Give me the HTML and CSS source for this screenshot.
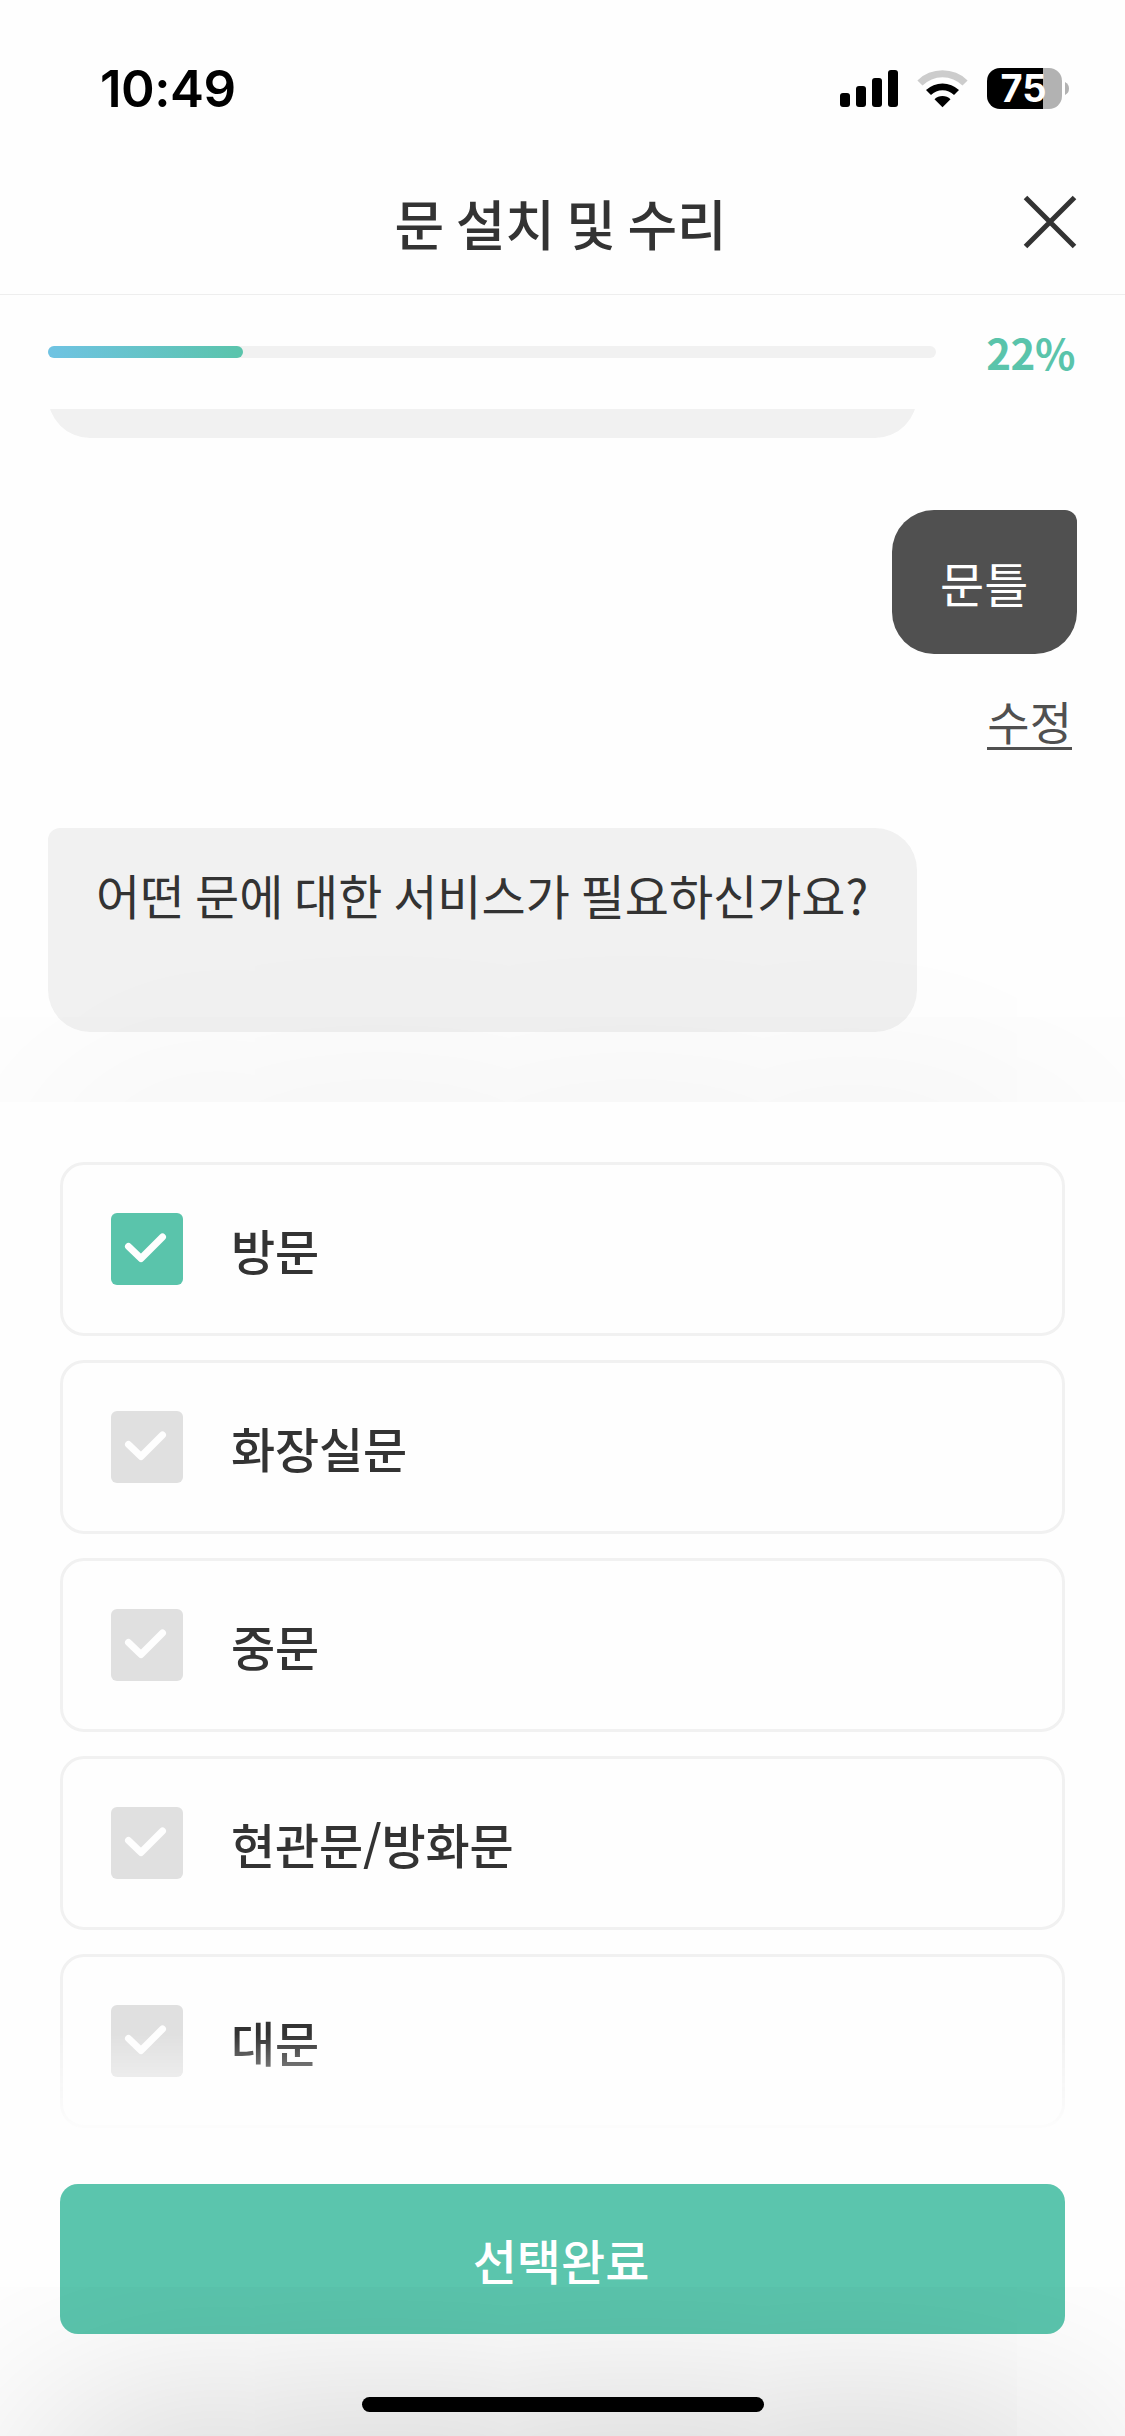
FILE: index.html
```html
<!DOCTYPE html>
<html lang="ko">
<head>
<meta charset="utf-8">
<title>문 설치 및 수리</title>
<link rel="stylesheet" href="styles.css">
</head>
<body>
<div class="screen">
  <div class="status-bar">
    <span class="time">10:49</span>
    <svg class="status-icons" width="229" height="41" viewBox="0 0 229 41">
      <rect x="0" y="25" width="10" height="14" rx="3"/>
      <rect x="16" y="18" width="10" height="21" rx="3"/>
      <rect x="32" y="10" width="10" height="29" rx="3"/>
      <rect x="48" y="2" width="10" height="37" rx="3"/>
      <path d="M77.400 12.400A36 36 0 0 1 127.600 12.400L122.500 17.500A28.500 28.500 0 0 0 82.500 17.500Z" fill="#ccc"/>
      <path d="M86 22A24 24 0 0 1 119 22L114 27A16.500 16.500 0 0 0 91 27Z"/>
      <path d="M94.500 31.300A11.500 11.500 0 0 1 110.500 31.300L102.500 39.300Z"/>
      <path d="M160 0H203V41H160A13 13 0 0 1 147 28V13A13 13 0 0 1 160 0Z"/>
      <path d="M203 0H209A13 13 0 0 1 222 13V28A13 13 0 0 1 209 41H203Z" fill="#b2b2b2"/>
      <path d="M225 14Q229 16 229 20.500T225 27Z" fill="#b2b2b2"/>
      <text class="battery-level" x="183.500" y="34" text-anchor="middle">75</text>
    </svg>
  </div>
  <header class="header">
    <h1 class="title">문 설치 및 수리</h1>
    <svg class="close" width="54" height="54" viewBox="0 0 54 54"><path d="M2.500 2.500L51.500 51.500M51.500 2.500L2.500 51.500"/></svg>
  </header>
  <div class="progress">
    <div class="track"><div class="fill" style="width: 22%"></div></div>
    <span class="percent">22%</span>
  </div>
  <main class="chat">
    <div class="bubble question previous"></div>
    <div class="bubble answer">문틀</div>
    <a class="edit">수정</a>
    <div class="bubble question current">어떤 문에 대한 서비스가 필요하신가요?</div>
    <div class="chat-shade"></div>
  </main>
  <section class="sheet">
    <ul class="options">
      <li class="option"><span class="box checked"><svg viewBox="0 0 72 72"><path d="M17.500 33.500L30 45.500L51.500 24"/></svg></span>방문</li>
      <li class="option"><span class="box"><svg viewBox="0 0 72 72"><path d="M17.500 33.500L30 45.500L51.500 24"/></svg></span>화장실문</li>
      <li class="option"><span class="box"><svg viewBox="0 0 72 72"><path d="M17.500 33.500L30 45.500L51.500 24"/></svg></span>중문</li>
      <li class="option"><span class="box"><svg viewBox="0 0 72 72"><path d="M17.500 33.500L30 45.500L51.500 24"/></svg></span>현관문/방화문</li>
      <li class="option"><span class="box"><svg viewBox="0 0 72 72"><path d="M17.500 33.500L30 45.500L51.500 24"/></svg></span>대문</li>
    </ul>
    <div class="submit">선택완료</div>
    <div class="home-bar"></div>
    <div class="sheet-shade"></div>
  </section>
</div>
</body>
</html>
```
FILE: styles.css
```css
* { box-sizing: border-box; }
body { margin: 0; background: #fefefe; }
.screen {
  display: flex;
  flex-direction: column;
  width: 1125px;
  height: 2436px;
  overflow: hidden;
  background: #fefefe;
  color: #333;
  font-family: "Noto Sans CJK KR", sans-serif;
  font-size: 48px;
  line-height: 72px;
}
.status-bar {
  display: flex;
  justify-content: space-between;
  align-items: center;
  height: 132px;
  padding: 45px 56px 0 100px;
}
.time {
  font: 600 51px/60px Inter, sans-serif;
  letter-spacing: -0.5px;
  color: #000;
}
.status-icons { display: block; overflow: visible; }
.battery-level { font: 700 38px Inter, sans-serif; fill: #fff; }
.header {
  display: grid;
  grid-template-columns: 54px 1fr 54px;
  align-items: center;
  height: 163px;
  padding: 4px 48px 0;
  border-bottom: 1px solid #eee;
}
.title {
  grid-column: 2;
  margin: 15px 4px 0 0;
  text-align: center;
  font-size: 54px;
  font-weight: 500;
  letter-spacing: -0.2px;
  word-spacing: -3.2px;
}
.close { fill: none; stroke: #333; stroke-width: 5; margin-top: 14px; }
.progress {
  display: flex;
  align-items: center;
  justify-content: space-between;
  height: 114px;
  padding: 0 50px 0 48px;
}
.track { width: 888px; height: 12px; border-radius: 6px; background: #f1f1f1; }
.fill {
  height: 12px;
  border-radius: 6px;
  background: linear-gradient(90deg, #6fc3e3, #5ac4ab);
}
.percent { margin-top: -1px; font-size: 42px; font-weight: 700; letter-spacing: -0.4px; color: #5ac4ab; }
.chat {
  position: relative;
  display: flex;
  flex-direction: column;
  height: 693px;
  overflow: hidden;
  padding: 0 48px;
}
.bubble { flex: none; padding: 36px 48px; }
.question { align-self: flex-start; background: #f1f1f1; border-radius: 12px 42px 42px 42px; }
.previous { width: 869px; height: 204px; margin-top: -175px; }
.answer {
  align-self: flex-end;
  width: 185px;
  height: 144px;
  margin-top: 72px;
  border-radius: 42px 12px 42px 42px;
  background: #505050;
  color: #fff;
}
.edit {
  align-self: flex-end;
  height: 58px;
  margin: 38px 5px 0 0;
  font-size: 46px;
  line-height: 57px;
  color: #505050;
  border-bottom: 3px solid #505050;
}
.current {
  width: 869px;
  height: 204px;
  margin-top: 78px;
  padding-top: 30px;
  word-spacing: -2.7px;
  white-space: nowrap;
}
.chat-shade, .sheet-shade {
  position: absolute;
  left: 30px;
  right: 30px;
  top: 100%;
  height: 600px;
  border-radius: 100px;
  pointer-events: none;
}
.chat-shade { box-shadow: 0 0 230px rgba(0, 0, 0, .07); }
.sheet-shade { box-shadow: 0 0 210px rgba(0, 0, 0, .25); }
.sheet {
  position: relative;
  display: flex;
  flex-direction: column;
  align-items: center;
  height: 1334px;
  overflow: hidden;
  padding-top: 60px;
  background: #fefefe;
}
.options {
  display: flex;
  flex-direction: column;
  gap: 24px;
  width: 1005px;
  height: 978px;
  margin: 0;
  padding: 0;
  list-style: none;
  -webkit-mask-image: linear-gradient(#000 872px, transparent 978px);
  mask-image: linear-gradient(#000 872px, transparent 978px);
}
.option {
  display: flex;
  align-items: center;
  gap: 48px;
  height: 174px;
  flex: none;
  padding: 0 48px;
  border: 3px solid #f1f1f1;
  border-radius: 24px;
  font-weight: 500;
  letter-spacing: -0.2px;
}
.box { width: 72px; height: 72px; border-radius: 6px; background: #e0e0e0; }
.checked { background: #5ac4ab; }
.box svg {
  display: block;
  fill: none;
  stroke: #fefefe;
  stroke-width: 7;
  stroke-linecap: round;
  stroke-linejoin: round;
}
.submit {
  width: 1005px;
  height: 150px;
  margin-top: 44px;
  padding-right: 3px;
  border-radius: 18px;
  background: #5bc5ad;
  color: #fff;
  font-weight: 500;
  line-height: 150px;
  text-align: center;
}
.home-bar { width: 402px; height: 15px; margin-top: 63px; border-radius: 8px; background: #000; }
```
